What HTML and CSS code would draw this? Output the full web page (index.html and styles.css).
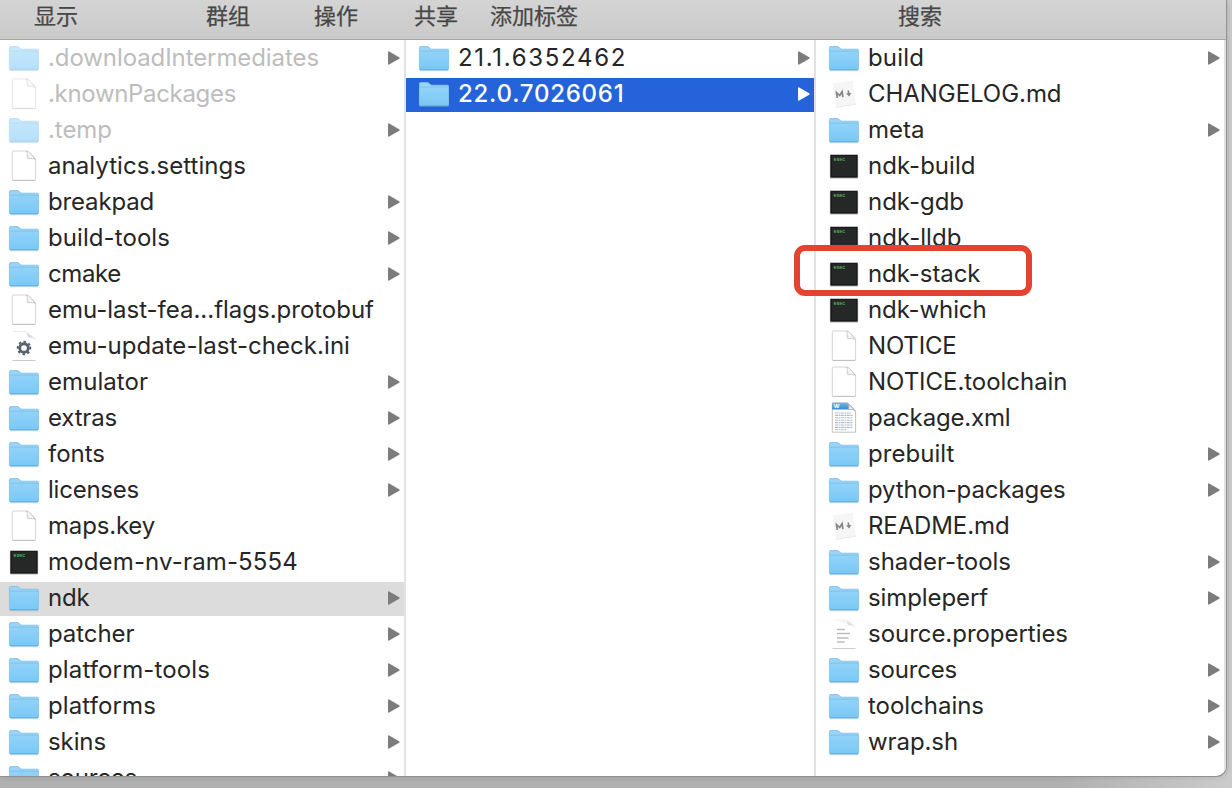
FILE: index.html
```html
<!DOCTYPE html>
<html lang="zh-CN">
<head>
<meta charset="utf-8">
<title>ndk</title>
<link rel="stylesheet" href="styles.css">
</head>
<body>
<svg class="defs" aria-hidden="true">
  <defs>
    <linearGradient id="blue" x1="0" y1="0" x2="0" y2="1"><stop offset="0" stop-color="#92d3f9"/><stop offset="1" stop-color="#7ac8f5"/></linearGradient>
    <linearGradient id="word" x1="0" y1="0" x2="0" y2="1"><stop offset="0" stop-color="#69b6e2"/><stop offset="1" stop-color="#3a8cc8"/></linearGradient>
    <linearGradient id="curl" x1="0" y1="1" x2="1" y2="0"><stop offset="0" stop-color="#dcdcdc"/><stop offset=".6" stop-color="#fff"/></linearGradient>
    <symbol id="folder" viewBox="0 0 32 36">
      <path d="M2 30.800h28" stroke="#000" stroke-opacity=".12" stroke-width="1"/>
      <path d="M1.400 29V7.800q0-1.300 1.300-1.300h6.400q1 0 1.800.8l1.500 1.300q.8.600 1.800.6h15.300q1 0 1 1V29q0 1-1 1H2.400q-1 0-1-1z" fill="#9ad5f8" stroke="#7dbfe4" stroke-width=".8"/>
      <path d="M1.600 11h28.800v18q0 .9-.9.9h-27q-.9 0-.9-.9z" fill="url(#blue)"/>
      <path d="M1.600 11.100h28.800" stroke="#78bee6" stroke-width=".8"/>
      <path d="M2 29.700h28" stroke="#68add4" stroke-width=".9"/>
    </symbol>
    <symbol id="page" viewBox="0 0 32 36">
      <path d="M5.500 3h13.300q1.100 0 2 .9l6 6q.8.800.8 2v19.200q0 1.200-1.200 1.200H5.500q-1.200 0-1.200-1.200V4.200Q4.300 3 5.500 3z" fill="#fff" stroke="#cfcfcf" stroke-width=".9"/>
      <path d="M4.600 32.500h22.800" stroke="#b5b5b5" stroke-width=".7"/>
      <path d="M18.200 3.300q1 .6 1 2v4.200q0 1.100 1.100 1.100h3.700q2.300 0 3.300 1.200L21.200 4z" fill="url(#curl)" stroke="#c4c4c4" stroke-width=".8"/>
    </symbol>
    <symbol id="exec" viewBox="0 0 32 36">
      <rect x="1.800" y="7.500" width="28.500" height="23.300" rx="1" fill="#000" opacity=".2"/>
      <rect x="2" y="6.700" width="28" height="23.400" fill="#c9c9c9"/>
      <rect x="2.900" y="7.300" width="26.200" height="21.800" fill="#262727" stroke="#0c0c0c"/>
      <text x="5.500" y="13" class="exec-label">exec</text>
    </symbol>
    <symbol id="ini" viewBox="0 0 32 36">
      <path d="M5 3.400h12.500q2 .5 2 3.500 0 2.300 2 2.300h3" fill="none" stroke="#ededed" stroke-width="1.200"/>
      <path d="M19.500 5q0 3.500 1.500 4h2.500q2.500.3 3.500 2.300l-3-3z" fill="#ddd" stroke="#d9d9d9" stroke-width=".6"/>
      <circle cx="16" cy="20" r="4.300" fill="none" stroke="#56626c" stroke-width="2.900"/>
      <circle cx="16" cy="20" r="6.300" fill="none" stroke="#56626c" stroke-width="2" stroke-dasharray="2.470 2.478" transform="rotate(-11 16 20)"/>
      <path d="M4.500 32.500h23" stroke="#c2c2c2" stroke-width=".9"/>
    </symbol>
    <symbol id="text" viewBox="0 0 32 36">
      <path d="M5 3.400h14.500l7 8q-1-1.300-3-1.300h-2q-1.700-.2-2-2.200z" fill="#f5f5f5"/>
      <path d="M19.500 5q0 3.500 1.500 4h2.500q2.500.3 3.500 2.300l-3-3z" fill="#e2e2e2" stroke="#dedede" stroke-width=".6"/>
      <path d="M9 13.500h8M9 17.500h13M9 22h11.500M9 26h7.500" stroke="#bdbdbd" stroke-width="1.500"/>
      <path d="M4.500 32.500h23" stroke="#c7c7c7" stroke-width=".9"/>
    </symbol>
    <symbol id="md" viewBox="0 0 32 36">
      <path d="M4.500 7.500l20-3 3.500 23.500-20 3.500z" fill="#f6f6f6"/>
      <path d="M7.900 31.600L28.200 28" stroke="#e4e4e4" stroke-width=".8"/>
      <path d="M9.300 22l-.8-5.500 3.200 3 2.400-3.800.8 5.500" fill="none" stroke="#858585" stroke-width="1.700"/>
      <path d="M20.300 14.500l.6 4.500" stroke="#858585" stroke-width="1.600"/>
      <path d="M18 17.600l5.400-.7-2.300 3.700z" fill="#858585"/>
    </symbol>
    <symbol id="doc" viewBox="0 0 32 36">
      <path d="M4.300 3h15.500l7.800 8v21.200H4.300z" fill="#fff" stroke="#b8b8b8" stroke-width=".9"/>
      <path d="M4.200 2.700h15.500l6.800 6.800H4.200z" fill="url(#word)"/>
      <text x="5.700" y="8.300" class="word-label">W</text>
      <path d="M19.200 3q2.300 2 1.600 6.300 4-.4 6.700 1.800z" fill="#f1f1f1" stroke="#b2b2b2" stroke-width=".7"/>
      <path d="M7 13h16M7 15.400h18M7 17.800h18M7 20.200h18M7 22.600h18M7 25h18M7 27.400h18M7 29.800h12" stroke="#b3bbc7" stroke-width="1.100" stroke-dasharray="3 .6 1.800 .5"/>
    </symbol>
    <symbol id="arrow" viewBox="0 0 12 14">
      <path d="M0 1.300Q0 0 1.200.5L11.200 6.200q1 .8 0 1.600L1.200 13.500Q0 14 0 12.700z" fill="currentColor"/>
    </symbol>
  </defs>
</svg>
<div class="window">
  <header class="toolbar">
    <span class="tool tool-view">显示</span>
    <span class="tool tool-group">群组</span>
    <span class="tool tool-action">操作</span>
    <span class="tool tool-share">共享</span>
    <span class="tool tool-tag">添加标签</span>
    <span class="tool tool-search">搜索</span>
  </header>
  <main class="browser">
    <div class="column" id="sdk"></div>
    <div class="column column-inset" id="versions"></div>
    <div class="column column-inset-small" id="contents"></div>
  </main>
  <div class="callout"></div>
</div>
<script src="script.js"></script>
</body>
</html>
```
FILE: styles.css
```css
body {
  margin: 0;
  width: 1232px;
  height: 788px;
  overflow: hidden;
  background: linear-gradient(90deg, #b0b0b0 0, #b0b0b0 1060px, #cbcbcb 1232px);
  font-family: Inter, "Noto Sans CJK SC", sans-serif;
}

.defs {
  position: absolute;
  width: 0;
  height: 0;
}

.window {
  position: relative;
  display: flex;
  flex-direction: column;
  width: 1226px;
  height: 776px;
  overflow: hidden;
  background: #fff;
  border-bottom-right-radius: 10px;
  box-shadow: 0 0 0 1px #929292, 2px 1px 5px rgba(0, 0, 0, 0.12);
}

.toolbar {
  display: flex;
  flex: none;
  box-sizing: border-box;
  height: 40px;
  padding-left: 34px;
  border-bottom: 1px solid #a5a5a5;
  background: linear-gradient(#d4d4d4, #cacaca);
  color: #474747;
  font: 22px/28px "Noto Sans CJK SC", sans-serif;
  -webkit-text-stroke: 0.25px #474747;
}

.tool { flex: none; }
.tool-group { margin-left: 128px; }
.tool-action { margin-left: 64px; }
.tool-share { margin-left: 56px; }
.tool-tag { margin-left: 32px; }
.tool-search { margin-left: 320px; }

.browser {
  display: grid;
  grid-template-columns: 406px 410px 410px;
  flex: 1;
  min-height: 0;
}

.column {
  box-sizing: border-box;
  min-width: 0;
  overflow: hidden;
  border-right: 2px solid #e2e2e2;
}

.row {
  display: flex;
  align-items: center;
  box-sizing: border-box;
  height: 36px;
  padding: 0 4px 0 8px;
  color: #262626;
}

.column-inset .row,
.column-inset-small .row { padding-left: 12px; }

.icon {
  flex: none;
  width: 32px;
  height: 36px;
  margin-right: 8px;
}

.name {
  flex: none;
  font-size: 24px;
  line-height: 36px;
  white-space: nowrap;
}

.arrow {
  flex: none;
  width: 12px;
  height: 14px;
  margin-left: auto;
  color: #7c7c7c;
}

.is-hidden .name { color: #bdbdbd; }
.is-hidden .icon { opacity: 0.55; }

.is-open,
.is-selected {
  background-repeat: no-repeat;
  background-position: 0 2px;
}

.is-open { background-image: linear-gradient(#dcdcdc, #dcdcdc); }

.is-selected {
  background-image: linear-gradient(#2463d9, #2463d9);
  color: #fff;
}

.is-selected .name { font-weight: 500; }
.is-selected .arrow { color: #fff; }

.exec-label {
  fill: #58b45c;
  font: bold 4.8px "Liberation Mono", monospace;
}

.word-label {
  fill: #fff;
  font: bold 6px "Liberation Sans", sans-serif;
}

.callout {
  position: absolute;
  left: 794px;
  top: 245px;
  box-sizing: border-box;
  width: 238px;
  height: 51px;
  border: 6px solid #e2442d;
  border-radius: 11px;
}
```
FILE: script.js
```js
// Each entry: name, icon, width of the name, expandable, state class.
const columns = {
  sdk: [
    ['.downloadIntermediates', 'folder', 271, true, 'is-hidden'],
    ['.knownPackages', 'page', 188, false, 'is-hidden'],
    ['.temp', 'folder', 64, true, 'is-hidden'],
    ['analytics.settings', 'page', 198],
    ['breakpad', 'folder', 106, true],
    ['build-tools', 'folder', 122, true],
    ['cmake', 'folder', 73, true],
    ['emu-last-fea...flags.protobuf', 'page', 326],
    ['emu-update-last-check.ini', 'ini', 302],
    ['emulator', 'folder', 100, true],
    ['extras', 'folder', 69, true],
    ['fonts', 'folder', 57, true],
    ['licenses', 'folder', 91, true],
    ['maps.key', 'page', 107],
    ['modem-nv-ram-5554', 'exec', 250],
    ['ndk', 'folder', 41.5, true, 'is-open'],
    ['patcher', 'folder', 86.5, true],
    ['platform-tools', 'folder', 162, true],
    ['platforms', 'folder', 108, true],
    ['skins', 'folder', 58, true],
    ['sources', 'folder', 89, true],
  ],
  versions: [
    ['21.1.6352462', 'folder', 169, true],
    ['22.0.7026061', 'folder', 166.5, true, 'is-selected'],
  ],
  contents: [
    ['build', 'folder', 56, true],
    ['CHANGELOG.md', 'md', 193.5],
    ['meta', 'folder', 56.5, true],
    ['ndk-build', 'exec', 107.5],
    ['ndk-gdb', 'exec', 96],
    ['ndk-lldb', 'exec', 93.5],
    ['ndk-stack', 'exec', 112.5],
    ['ndk-which', 'exec', 118.5],
    ['NOTICE', 'page', 88.5],
    ['NOTICE.toolchain', 'page', 199.5],
    ['package.xml', 'doc', 142.5],
    ['prebuilt', 'folder', 86.5, true],
    ['python-packages', 'folder', 197.5, true],
    ['README.md', 'md', 141.5],
    ['shader-tools', 'folder', 143, true],
    ['simpleperf', 'folder', 120, true],
    ['source.properties', 'text', 200],
    ['sources', 'folder', 89, true],
    ['toolchains', 'folder', 116, true],
    ['wrap.sh', 'folder', 90, true],
  ],
};

for (const [id, rows] of Object.entries(columns)) {
  const column = document.getElementById(id);
  for (const [name, icon, width, expandable, state] of rows) {
    const row = document.createElement('div');
    row.className = 'row ' + (state || '');
    row.innerHTML =
      `<svg class="icon"><use href="#${icon}"/></svg>` +
      `<span class="name">${name}</span>` +
      (expandable ? '<svg class="arrow"><use href="#arrow"/></svg>' : '');
    column.append(row);
    const label = row.querySelector('.name');
    const spacing = (width - label.getBoundingClientRect().width) / name.length;
    label.style.letterSpacing = spacing.toFixed(3) + 'px';
  }
}
```
